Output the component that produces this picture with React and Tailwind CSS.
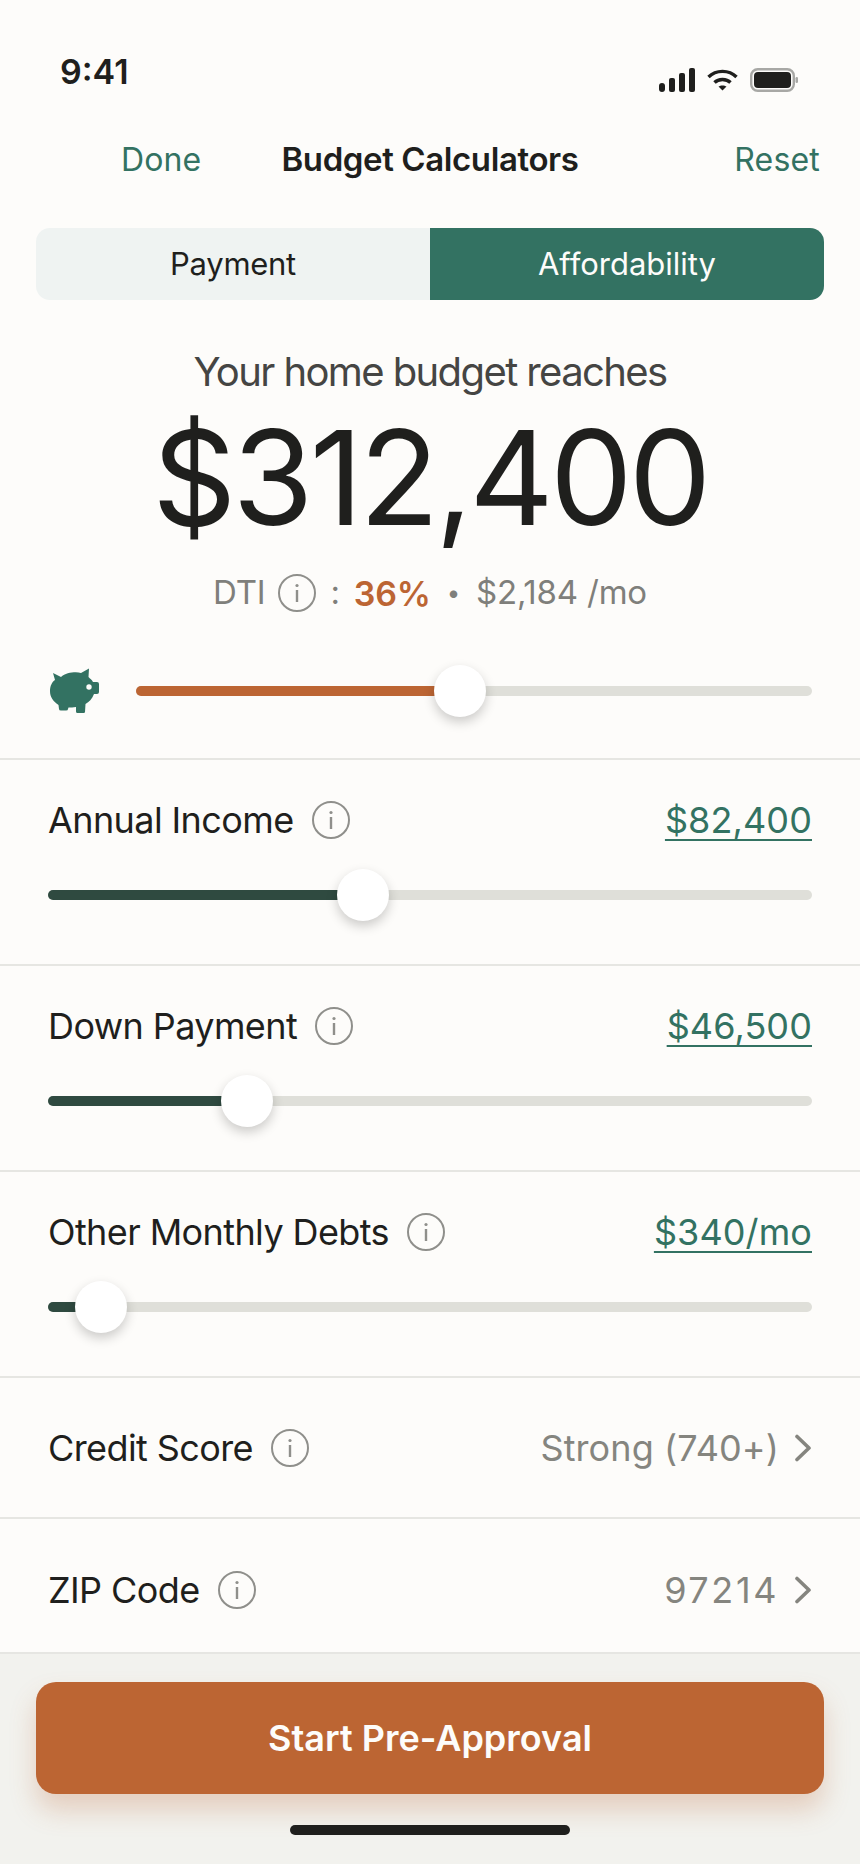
import React from 'react';

const SLIDERS = [
    { label: 'Annual Income', value: '$82,400', percent: 41.2 },
    { label: 'Down Payment', value: '$46,500', percent: 26 },
    { label: 'Other Monthly Debts', value: '$340/mo', percent: 7 }
];

function InfoIcon({ size = 38 }) {
    return (
        <svg width={size} height={size} viewBox="0 0 38 38" fill="none" className="shrink-0">
            <circle cx="19" cy="19" r="18" stroke="#8f8f8b" strokeWidth="2" />
            <circle cx="19" cy="11.5" r="1.6" fill="#8f8f8b" />
            <rect x="17.8" y="16" width="2.4" height="12" fill="#8f8f8b" />
        </svg>
    );
}

function Chevron() {
    return (
        <svg width="18" height="28" viewBox="0 0 18 28" fill="none" className="shrink-0">
            <path d="M3 2.5 L15 14 L3 25.5" stroke="#85857f" strokeWidth="3.6" strokeLinecap="round" strokeLinejoin="round" />
        </svg>
    );
}

function PigIcon() {
    return (
        <svg width="50" height="46" viewBox="0 0 50 46" className="shrink-0">
            <path
                d="M3 5 L11 9 C16 4.5 26 3.5 31 5 L39 0.5 L38.5 9 C40 10.5 42 12 43 14 L47 14 Q49 14 49 16 L49 24 Q49 26 47 26 L44 26 C42 31 39 34 35.5 36 L35 44 Q35 45 33.5 45 L27.5 45 Q26 45 26 43.5 L26 39 C23 39.5 21 39.5 18.5 39.5 L18 41 Q18 42.5 16 42.5 L11 42.5 Q9 42.5 9 41 L8.5 37 C3 33 0 29 0 23 C0 18 2 14 5 12 Z"
                fill="#337262"
            />
            <circle cx="39" cy="19" r="2.7" fill="#fdfcfa" />
        </svg>
    );
}

function StatusIcons() {
    return (
        <div className="flex items-center gap-[12px]">
            <svg width="36" height="24" viewBox="0 0 36 24" fill="#1f1f1d">
                <rect x="0" y="15" width="6" height="9" rx="3" />
                <rect x="10" y="10" width="6" height="14" rx="2" />
                <rect x="20" y="5" width="6" height="19" rx="2" />
                <rect x="30" y="0" width="6" height="24" rx="2" />
            </svg>
            <svg width="31" height="22" viewBox="0 0 31 22" fill="none" stroke="#1f1f1d" strokeWidth="3.4">
                <path d="M1.5 8 C9 0.5 22 0.5 29.5 8" />
                <path d="M7.5 13.5 C11.5 9.5 19.5 9.5 23.5 13.5" />
                <path d="M15.5 21.5 L11.5 17.5 C13.5 16 17.5 16 19.5 17.5 Z" fill="#1f1f1d" stroke="none" />
            </svg>
            <svg width="49" height="24" viewBox="0 0 49 24" fill="none">
                <rect x="1.2" y="1.2" width="42.6" height="21.6" rx="6.5" stroke="#a8a8a5" strokeWidth="2.4" />
                <rect x="4" y="4" width="37" height="16" rx="4" fill="#1f1f1d" />
                <rect x="45.5" y="9" width="2.5" height="6" rx="1.2" fill="#a8a8a5" />
            </svg>
        </div>
    );
}

function Slider({ percent, fill }) {
    return (
        <div className="relative h-[10px] flex-1 rounded-full bg-[#dfdfd9]">
            <div className="h-full rounded-full" style={{ width: `${percent}%`, backgroundColor: fill }} />
            <div
                className="absolute top-1/2 h-[52px] w-[52px] -translate-x-1/2 -translate-y-1/2 rounded-full bg-white shadow-[0_5px_12px_rgba(0,0,0,0.2)]"
                style={{ left: `${percent}%` }}
            />
        </div>
    );
}

function SliderRow({ label, value, percent }) {
    return (
        <div className="h-[206px] border-b-2 border-[#e6e6e2] px-[48px] pt-[38px]">
            <div className="flex h-[44px] items-center justify-between">
                <div className="flex items-center gap-[18px]">
                    <span className="text-[36px] tracking-[-0.6px] text-[#1f1f1d]">{label}</span>
                    <InfoIcon />
                </div>
                <span className="text-[36px] tracking-[0.1px] text-[#337262] underline underline-offset-[6px] decoration-2">{value}</span>
            </div>
            <div className="mt-[48px] flex">
                <Slider percent={percent} fill="#2f4a40" />
            </div>
        </div>
    );
}

function SelectRow({ label, value, height, offset, spacing }) {
    return (
        <div className={`flex items-center justify-between border-b-2 border-[#e6e6e2] px-[48px] ${height} ${offset}`}>
            <div className="flex items-center gap-[18px]">
                <span className="text-[36px] tracking-[-0.6px] text-[#1f1f1d]">{label}</span>
                <InfoIcon />
            </div>
            <div className="flex items-center gap-[15px]">
                <span className={`text-[36px] text-[#85857f] ${spacing}`}>{value}</span>
                <Chevron />
            </div>
        </div>
    );
}

export default function App() {
    return (
        <div className="flex h-[1864px] w-[860px] flex-col overflow-hidden bg-[#fdfcfa] font-['Inter','Liberation_Sans',sans-serif]">
            {/* status bar */}
            <div className="flex h-[120px] justify-between pl-[60px] pr-[61px]">
                <span className="mt-[52px] text-[34px] leading-[40px] font-semibold text-[#1f1f1d]">9:41</span>
                <div className="mt-[68px]">
                    <StatusIcons />
                </div>
            </div>

            {/* nav */}
            <div className="grid h-[80px] grid-cols-[1fr_auto_1fr] items-center">
                <span className="pl-[121px] text-[32px] tracking-[0.1px] text-[#337262]">Done</span>
                <span className="text-[33px] font-semibold tracking-[-0.4px] text-[#1f1f1d]">Budget Calculators</span>
                <span className="pr-[40px] text-right text-[32px] tracking-[0.2px] text-[#337262]">Reset</span>
            </div>

            {/* segmented control */}
            <div className="mx-[36px] mt-[28px] flex h-[72px] overflow-hidden rounded-[14px] text-[31px]">
                <div className="flex flex-1 items-center justify-center bg-[#eff3f2] tracking-[-0.3px] text-[#1f1f1d]">Payment</div>
                <div className="flex flex-1 items-center justify-center bg-[#337262] text-[#fdfcfa]">Affordability</div>
            </div>

            {/* summary */}
            <div className="flex flex-col items-center">
                <div className="mt-[48px] h-[48px] text-[40px] leading-[48px] tracking-[-1.6px] text-[#454543]">Your home budget reaches</div>
                <div className="mt-[8px] h-[148px] text-[131px] leading-[148px] tracking-[-3.8px] text-[#1f1f1d]">$312,400</div>
                <div className="mt-[21px] flex h-[40px] items-center text-[33px] tracking-[-0.2px] text-[#7f7f7b]">
                    <span>DTI</span>
                    <span className="ml-[13px]"><InfoIcon /></span>
                    <span className="ml-[14px]">:</span>
                    <span className="ml-[14px] text-[34px] font-semibold text-[#bc6533]">36%</span>
                    <span className="ml-[16px] text-[24px]">•</span>
                    <span className="ml-[16px]">$2,184 /mo</span>
                </div>
            </div>

            {/* budget slider */}
            <div className="mt-[44px] flex h-[68px] items-center pl-[50px] pr-[48px]">
                <PigIcon />
                <div className="ml-[36px] flex flex-1">
                    <Slider percent={48} fill="#bc6533" />
                </div>
            </div>
            <div className="mt-[33px] h-[2px] bg-[#e6e6e2]" />

            {SLIDERS.map(item => (
                <SliderRow key={item.label} {...item} />
            ))}

            <SelectRow label="Credit Score" value="Strong (740+)" height="h-[141px]" offset="" spacing="tracking-[0.1px]" />
            <SelectRow label="ZIP Code" value="97214" height="h-[135px]" offset="pt-[8px]" spacing="tracking-[2.6px]" />

            {/* footer */}
            <div className="flex flex-1 flex-col items-center bg-[#f2f2ee] px-[36px] pt-[28px]">
                <button
                    type="button"
                    className="h-[112px] w-full rounded-[20px] bg-[#bc6533] text-[36px] font-semibold text-[#fdfcfa] shadow-[0_16px_26px_rgba(188,101,51,0.25)]"
                >
                    Start Pre-Approval
                </button>
                <div className="mt-[31px] h-[10px] w-[280px] rounded-full bg-[#1f1f1d]" />
            </div>
        </div>
    );
}
